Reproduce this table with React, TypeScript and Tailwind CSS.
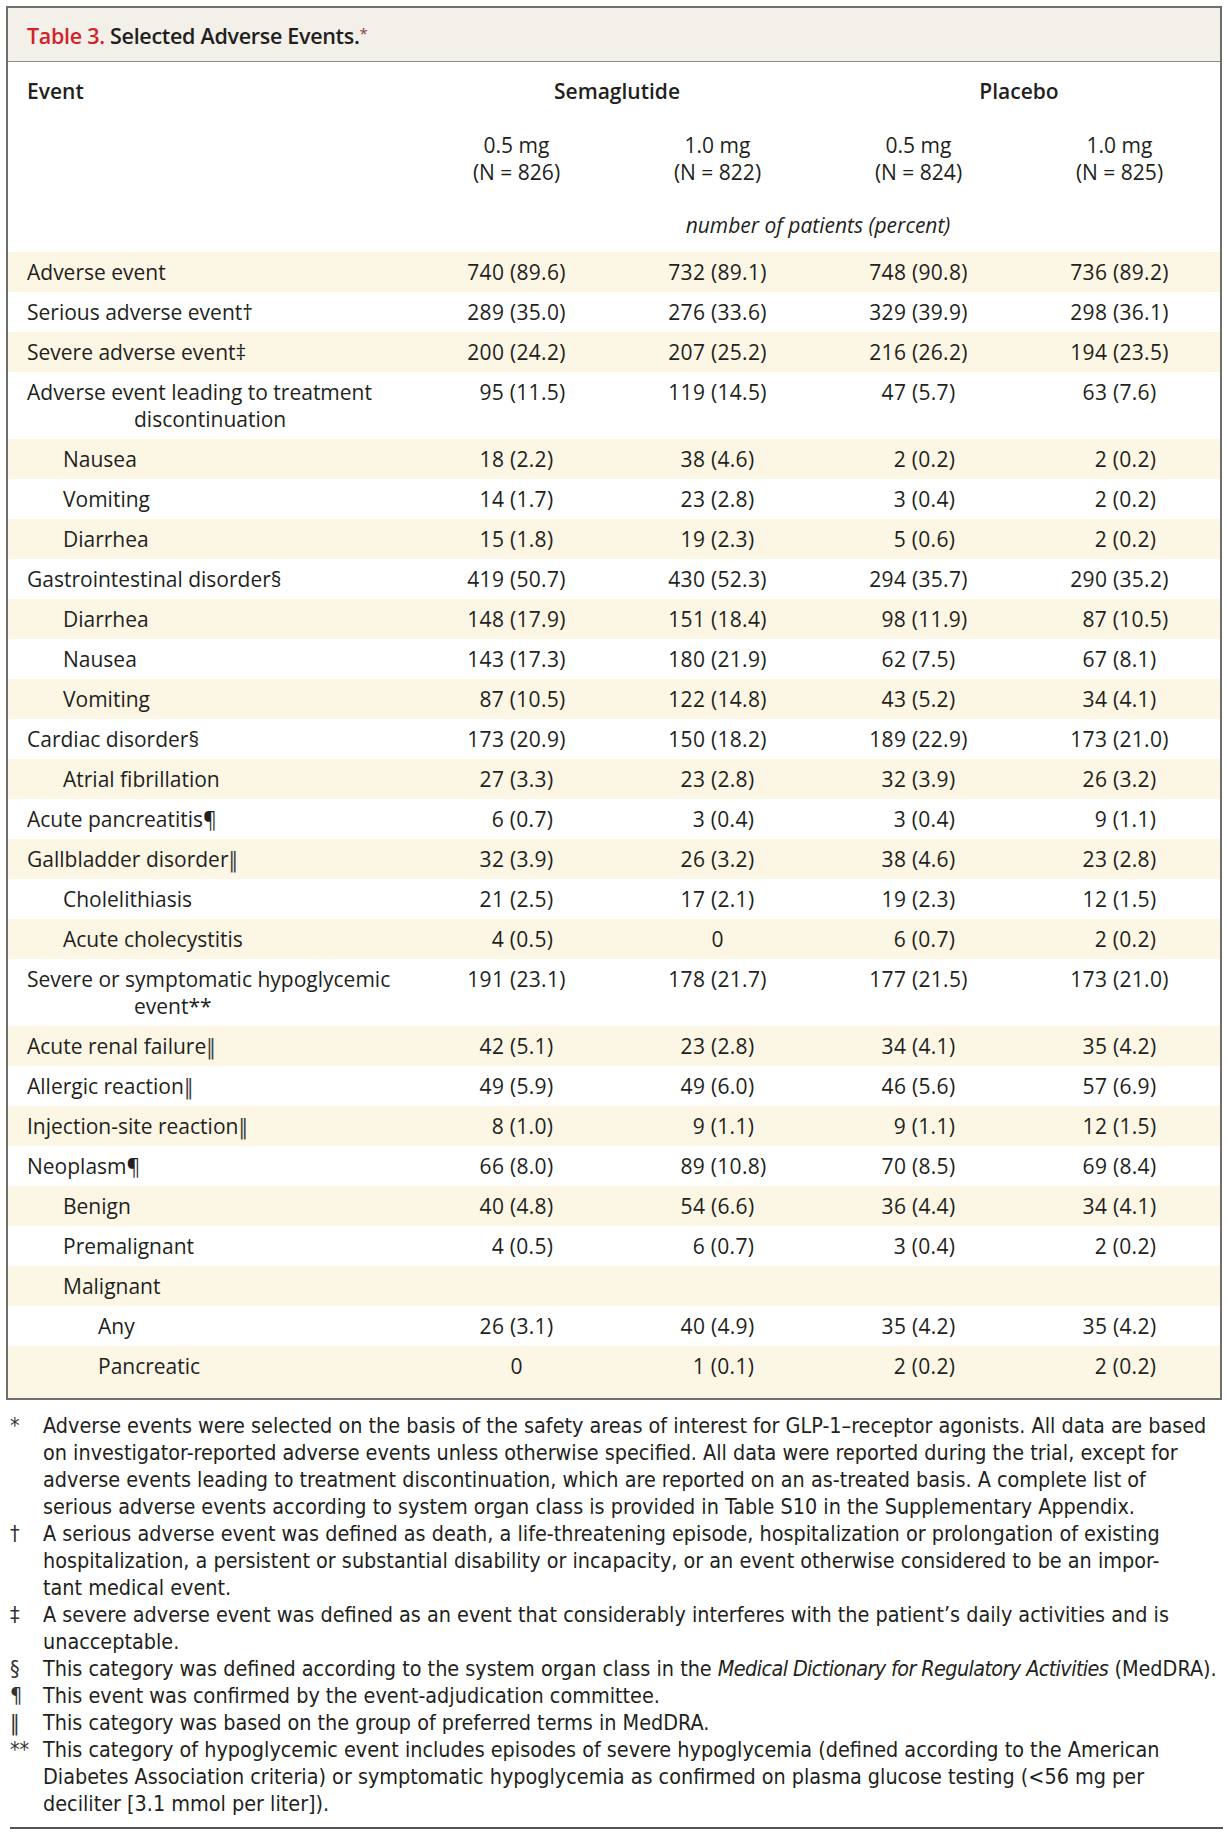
import React from "react";

type Row = {
  label: string;
  wrap?: string;
  level?: number;
  values?: string[];
};

const rows: Row[] = [
  { label: "Adverse event", values: ["740 (89.6)", "732 (89.1)", "748 (90.8)", "736 (89.2)"] },
  { label: "Serious adverse event†", values: ["289 (35.0)", "276 (33.6)", "329 (39.9)", "298 (36.1)"] },
  { label: "Severe adverse event‡", values: ["200 (24.2)", "207 (25.2)", "216 (26.2)", "194 (23.5)"] },
  {
    label: "Adverse event leading to treatment",
    wrap: "discontinuation",
    values: ["95 (11.5)", "119 (14.5)", "47 (5.7)", "63 (7.6)"],
  },
  { label: "Nausea", level: 1, values: ["18 (2.2)", "38 (4.6)", "2 (0.2)", "2 (0.2)"] },
  { label: "Vomiting", level: 1, values: ["14 (1.7)", "23 (2.8)", "3 (0.4)", "2 (0.2)"] },
  { label: "Diarrhea", level: 1, values: ["15 (1.8)", "19 (2.3)", "5 (0.6)", "2 (0.2)"] },
  { label: "Gastrointestinal disorder§", values: ["419 (50.7)", "430 (52.3)", "294 (35.7)", "290 (35.2)"] },
  { label: "Diarrhea", level: 1, values: ["148 (17.9)", "151 (18.4)", "98 (11.9)", "87 (10.5)"] },
  { label: "Nausea", level: 1, values: ["143 (17.3)", "180 (21.9)", "62 (7.5)", "67 (8.1)"] },
  { label: "Vomiting", level: 1, values: ["87 (10.5)", "122 (14.8)", "43 (5.2)", "34 (4.1)"] },
  { label: "Cardiac disorder§", values: ["173 (20.9)", "150 (18.2)", "189 (22.9)", "173 (21.0)"] },
  { label: "Atrial fibrillation", level: 1, values: ["27 (3.3)", "23 (2.8)", "32 (3.9)", "26 (3.2)"] },
  { label: "Acute pancreatitis¶", values: ["6 (0.7)", "3 (0.4)", "3 (0.4)", "9 (1.1)"] },
  { label: "Gallbladder disorder‖", values: ["32 (3.9)", "26 (3.2)", "38 (4.6)", "23 (2.8)"] },
  { label: "Cholelithiasis", level: 1, values: ["21 (2.5)", "17 (2.1)", "19 (2.3)", "12 (1.5)"] },
  { label: "Acute cholecystitis", level: 1, values: ["4 (0.5)", "0", "6 (0.7)", "2 (0.2)"] },
  {
    label: "Severe or symptomatic hypoglycemic",
    wrap: "event**",
    values: ["191 (23.1)", "178 (21.7)", "177 (21.5)", "173 (21.0)"],
  },
  { label: "Acute renal failure‖", values: ["42 (5.1)", "23 (2.8)", "34 (4.1)", "35 (4.2)"] },
  { label: "Allergic reaction‖", values: ["49 (5.9)", "49 (6.0)", "46 (5.6)", "57 (6.9)"] },
  { label: "Injection-site reaction‖", values: ["8 (1.0)", "9 (1.1)", "9 (1.1)", "12 (1.5)"] },
  { label: "Neoplasm¶", values: ["66 (8.0)", "89 (10.8)", "70 (8.5)", "69 (8.4)"] },
  { label: "Benign", level: 1, values: ["40 (4.8)", "54 (6.6)", "36 (4.4)", "34 (4.1)"] },
  { label: "Premalignant", level: 1, values: ["4 (0.5)", "6 (0.7)", "3 (0.4)", "2 (0.2)"] },
  { label: "Malignant", level: 1 },
  { label: "Any", level: 2, values: ["26 (3.1)", "40 (4.9)", "35 (4.2)", "35 (4.2)"] },
  { label: "Pancreatic", level: 2, values: ["0", "1 (0.1)", "2 (0.2)", "2 (0.2)"] },
];

const notes: { mark: React.ReactNode; lines: React.ReactNode[] }[] = [
  {
    mark: "*",
    lines: [
      "Adverse events were selected on the basis of the safety areas of interest for GLP-1–receptor agonists. All data are based",
      "on investigator-reported adverse events unless otherwise specified. All data were reported during the trial, except for",
      "adverse events leading to treatment discontinuation, which are reported on an as-treated basis. A complete list of",
      "serious adverse events according to system organ class is provided in Table S10 in the Supplementary Appendix.",
    ],
  },
  {
    mark: "†",
    lines: [
      "A serious adverse event was defined as death, a life-threatening episode, hospitalization or prolongation of existing",
      "hospitalization, a persistent or substantial disability or incapacity, or an event otherwise considered to be an impor-",
      "tant medical event.",
    ],
  },
  {
    mark: "‡",
    lines: [
      "A severe adverse event was defined as an event that considerably interferes with the patient’s daily activities and is",
      "unacceptable.",
    ],
  },
  {
    mark: "§",
    lines: [
      <>
        This category was defined according to the system organ class in the{" "}
        <i className="tracking-[-0.6px]">Medical Dictionary for Regulatory Activities</i> (MedDRA).
      </>,
    ],
  },
  { mark: "¶", lines: ["This event was confirmed by the event-adjudication committee."] },
  { mark: "‖", lines: ["This category was based on the group of preferred terms in MedDRA."] },
  {
    mark: "**",
    lines: [
      "This category of hypoglycemic event includes episodes of severe hypoglycemia (defined according to the American",
      "Diabetes Association criteria) or symptomatic hypoglycemia as confirmed on plasma glucose testing (<56 mg per",
      "deciliter [3.1 mmol per liter]).",
    ],
  },
];

// thin double bar instead of Open Sans' heavy one
function Label({ text }: { text: string }) {
  if (!text.endsWith("‖")) return <>{text}</>;
  return (
    <>
      {text.slice(0, -1)}
      <span className="font-['DejaVu_Sans_Condensed','DejaVu_Sans',sans-serif] leading-[0] text-[#444]">‖</span>
    </>
  );
}

// pad the count with digit-wide gaps so values line up like the printed table
function Value({ text }: { text?: string }) {
  if (!text) return <div />;
  const m = text.match(/^(\d+) \((\d+)\.(\d)\)$/);
  if (!m) return <div className="text-center">{text}</div>;
  const width = m[2].length > 1 ? 3 : 2;
  const pad = Math.max(0, width - m[1].length);
  return (
    <div className="text-center whitespace-nowrap tracking-[0.3px]">
      {pad > 0 && <span className={pad > 1 ? "inline-block w-[2ch]" : "inline-block w-[1ch]"} />}
      {text}
    </div>
  );
}

function App() {
  return (
    <div className="w-[1228px] min-h-[1836px] bg-white text-[#231f20] font-['Open_Sans',sans-serif] tabular-nums">
      <div className="pt-[6px] pl-[6px]">
        {/* Table */}
        <div className="w-[1216px] border-2 border-[#6e6e6e]">
          <div className="h-[54px] pt-[3px] bg-[#f3f0ea] border-b border-[#8c8c8c] pl-[19px] flex items-center">
            <h2 className="text-[21.5px] font-semibold tracking-[-0.3px]">
              <span className="text-[#d2232a]">Table 3.</span> Selected Adverse Events.
              <span className="text-[15px] align-[5px] font-normal text-[#8a3a3a]">*</span>
            </h2>
          </div>

          <div className="grid grid-cols-[408px_repeat(4,201px)] text-[21px] leading-[27px]">
            {/* Header */}
            <div className="pl-[19px] pt-[16px] font-semibold">Event</div>
            <div className="col-span-2 pt-[16px] text-center font-semibold">Semaglutide</div>
            <div className="col-span-2 pt-[16px] text-center font-semibold">Placebo</div>

            <div className="pt-[27px]" />
            {["0.5 mg|826", "1.0 mg|822", "0.5 mg|824", "1.0 mg|825"].map((h, i) => {
              const [dose, n] = h.split("|");
              return (
                <div key={i} className="pt-[27px] text-center">
                  <div>{dose}</div>
                  <div>(N = {n})</div>
                </div>
              );
            })}

            <div className="pt-[26px] pb-[13px]" />
            <div className="col-span-4 pt-[26px] pb-[13px] text-center italic">
              number of patients (percent)
            </div>

            {/* Body */}
            {rows.map((r, i) => {
              const shaded = i % 2 === 0;
              const last = i === rows.length - 1;
              const cell = `${shaded ? "bg-[#fcf6e5]" : "bg-white"} pt-[6.5px] ${last ? "pb-[18px]" : "pb-[6.5px]"}`;
              const indent = r.level === 2 ? "pl-[90px]" : r.level === 1 ? "pl-[55px]" : "pl-[19px]";
              return (
                <React.Fragment key={i}>
                  <div className={`${cell} ${indent} whitespace-nowrap`}>
                    <div className="h-[27px]">
                      <Label text={r.label} />
                    </div>
                    {r.wrap && <div className="pl-[107px]">{r.wrap}</div>}
                  </div>
                  {[0, 1, 2, 3].map((c) => (
                    <div key={c} className={cell}>
                      <Value text={r.values?.[c]} />
                    </div>
                  ))}
                </React.Fragment>
              );
            })}
          </div>
        </div>
      </div>

      {/* Footnotes */}
      <div className="pt-[12px] pl-[10px] pr-[5px] font-['Liberation_Sans_Narrow','DejaVu_Sans_Condensed','Lato',sans-serif] text-[21.4px] leading-[27px]">
        {notes.map((n, i) => (
          <div key={i} className="flex">
            <div className="w-[33px] shrink-0 text-[#333]">{n.mark}</div>
            <div className="whitespace-nowrap">
              {n.lines.map((l, j) => (
                <div key={j}>{l}</div>
              ))}
            </div>
          </div>
        ))}
        <div className="mt-[10px] h-[2px] bg-[#555]" />
      </div>
    </div>
  );
}

export default App;
